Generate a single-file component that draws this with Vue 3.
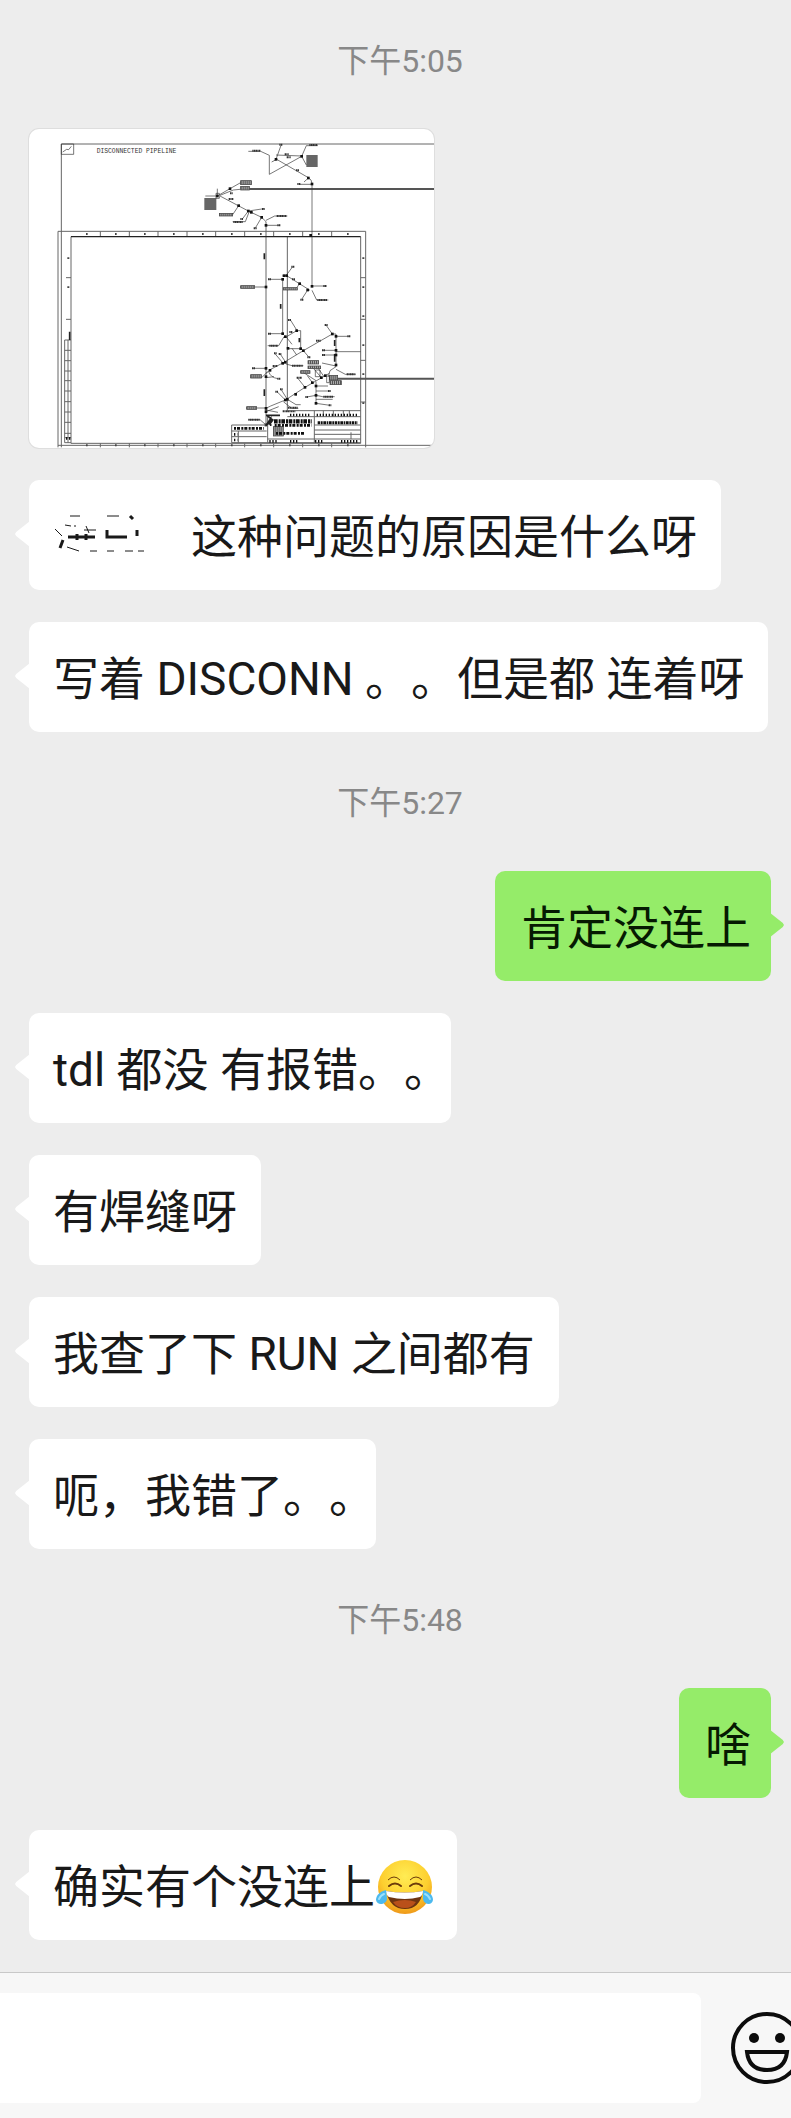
<script setup>
import { ref } from 'vue'

const draft = ref('')

const entries = [
  { kind: 'time', text: '下午5:05' },
  { kind: 'image' },
  { kind: 'in', text: '这种问题的原因是什么呀', masked: true },
  { kind: 'in', text: '写着 DISCONN 。。但是都 连着呀' },
  { kind: 'time', text: '下午5:27' },
  { kind: 'out', text: '肯定没连上' },
  { kind: 'in', text: 'tdl 都没 有报错。', stop: true },
  { kind: 'in', text: '有焊缝呀' },
  { kind: 'in', text: '我查了下 RUN 之间都有' },
  { kind: 'in', text: '呃，我错了。', stop: true },
  { kind: 'time', text: '下午5:48' },
  { kind: 'out', text: '啥' },
  { kind: 'in', text: '确实有个没连上', joy: true }
]

// Leader lines of the piping drawing
const leaders = [
  'M745 124H782L808 136V193L905 139L919 107H953M905 139L919 165',
  'M828 148L843 106M828 135L905 138M815 156L830 148L925 203Q936 208 936 222V530',
  'M897 223H936M912 216L925 204',
  'M652 236V258L690 236L720 219H742M660 256L700 240L720 238M616 258H652',
  'M660 258L745 303L785 322L798 335M716 287L698 314M745 303L727 327M748 304L736 335H698',
  'M745 303L792 296M785 322L766 354M798 331L824 318H862M798 346H840',
  'M722 531H798M805 508H848V670M848 497H858L878 470M860 497L930 541',
  'M899 520L888 537M923 540L905 568M936 541L950 570H985M936 528H980',
  'M805 671H848M860 680L890 662H902V716H864M890 660L872 631M803 707H836L852 680M858 680L876 703',
  'M798 790L812 778L852 757L910 722L997 672H1008V770M997 672L978 645M1008 679H1048',
  'M966 721H1008M966 735H1008M1008 725H1082M1008 770L990 782L985 800M966 759L1008 768M1008 778L1036 793H1067',
  'M856 755L840 731M848 758L824 730M858 762L876 767H910M910 722L928 743M890 735L876 715',
  'M757 775H798M752 803H785L803 785M806 785Q812 803 834 806M798 803L822 800',
  'M798 895L812 888L856 870L915 832L965 803L988 790',
  'M856 870L830 844M862 868L843 838M862 868L888 884H902M915 832L892 803M937 818L922 797M948 812L905 784M964 803L936 770M972 800L950 768',
  'M948 815V882M948 828H984M948 843H990M948 856L920 861M948 856L968 860H1004M948 868H998M948 880L990 886',
  'M740 894H798M798 900L834 907M798 905L836 890M745 929H780L798 945M850 875L875 895H895'
]

// Small nodes where pipe runs meet
const nodes = [
  [828, 148], [905, 139], [925, 204], [936, 222], [652, 258], [690, 236], [716, 287], [745, 303],
  [754, 307], [785, 322], [798, 346], [848, 508], [852, 497], [860, 497], [899, 521], [923, 540],
  [936, 529], [798, 531], [848, 671], [856, 680], [890, 662], [902, 716], [864, 715], [910, 722],
  [997, 672], [1008, 679], [1008, 721], [1008, 735], [1008, 765], [856, 757], [798, 775], [810, 781],
  [798, 800], [856, 870], [862, 868], [887, 853], [915, 832], [937, 818], [964, 803], [948, 828],
  [948, 856], [948, 880], [798, 895], [798, 905], [798, 945], [932, 376], [848, 760], [976, 797]
]

// Solid annotation labels: x, y, width, height
const labels = [
  [722, 212, 32, 12], [722, 229, 26, 11], [658, 310, 40, 8],
  [722, 527, 42, 8], [850, 533, 42, 7], [752, 794, 32, 10], [740, 890, 30, 8], [988, 796, 25, 14],
  [990, 812, 34, 12], [924, 752, 32, 10], [924, 768, 38, 8], [902, 782, 28, 8], [820, 950, 30, 28]
]

// Multi-line notes: x, y of the first line, width, number of lines
const notes = [
  [919, 138, 34, 6],
  [613, 267, 36, 6]
]

// Short size tags
const tags = [
  [838, 104, 10], [928, 105, 24], [757, 122, 24], [854, 133, 12], [860, 142, 12], [892, 222, 10],
  [888, 181, 10], [690, 250, 8], [686, 267, 14], [786, 297, 8], [761, 355, 10], [721, 327, 8],
  [832, 346, 10], [830, 318, 30], [700, 336, 28], [804, 508, 10], [874, 470, 10], [876, 508, 10],
  [970, 528, 10], [901, 569, 10], [952, 570, 30], [804, 671, 10], [864, 630, 10], [974, 645, 10],
  [1042, 679, 10], [966, 721, 10], [966, 735, 10], [948, 692, 14], [868, 666, 10], [808, 707, 26],
  [822, 730, 8], [836, 732, 8], [876, 767, 32], [818, 768, 14], [756, 775, 10], [832, 806, 10],
  [1040, 793, 26], [922, 742, 10], [890, 803, 16], [826, 845, 8], [840, 838, 8], [984, 843, 8],
  [986, 886, 8], [970, 860, 30], [864, 893, 30], [848, 904, 38], [745, 929, 34], [916, 861, 8]
]
</script>

<template>
  <div class="page">
    <main class="chat">
      <template v-for="(entry, i) in entries" :key="i">
        <time v-if="entry.kind === 'time'" class="time">{{ entry.text }}</time>

        <div v-else-if="entry.kind === 'image'" class="picture">
          <svg class="drawing" viewBox="87 57 1215 957" role="img" aria-label="Disconnected pipeline">
            <g class="soft">
              <path d="M184 1012V102H1302M174 1012V364H1097V1012M174 1006H1302" />
              <path d="M798 335V945M862 380V905M213 380V1000M213 1000H1082V380" />
              <path d="M301 364V380M388 364V380M474 364V380M561 364V380M647 364V380M734 364V380M821 364V380M908 364V380M995 364V380" />
              <path d="M301 1000V1012M388 1000V1012M474 1000V1012M561 1000V1012M647 1000V1012M734 1000V1012M821 1000V1012M908 1000V1012M995 1000V1012" />
              <path d="M198 503H213M198 628H213M1082 503H1097M1082 628H1097M1082 751H1097M1082 876H1097" />
              <path d="M194 690V998H213M204 690V998M194 690H213M194 721H213M194 752H213M194 783H213M194 812H213M194 843H213M194 875H213M194 906H213M194 937H213M194 970H213M194 983H213" />
            </g>
            <path class="frame" d="M213 380H1082" />
            <path class="cable" d="M748 237H1302M1012 806H1302" />
            <path class="line" d="M184 102H221V133H184Z" />
            <path class="pen" d="M188 126L200 118L206 119L214 109" />
            <path class="thick" d="M209 665V690" />
            <text class="caption" x="290" y="128">DISCONNECTED PIPELINE</text>

            <path v-for="(d, n) in leaders" :key="'l' + n" class="line" :d="d" />
            <path class="thick" d="M1004 690V708M1004 732V755M793 430V448M842 582V596M898 684V697M793 838V858" />
            <rect v-for="(p, n) in nodes" :key="'n' + n" class="ink" :x="p[0] - 4" :y="p[1] - 4" width="8" height="8" />
            <g v-for="(r, n) in labels" :key="'b' + n">
              <rect class="label" :x="r[0]" :y="r[1]" :width="r[2]" :height="r[3]" />
              <path class="stripes" :d="`M${r[0]} ${r[1] + r[3] / 2}h${r[2]}`" :stroke-width="r[3]" />
            </g>
            <g v-for="(b, n) in notes" :key="'m' + n">
              <path v-for="k in b[3]" :key="k" class="note" :d="`M${b[0]} ${b[1] + (k - 1) * 6}h${b[2]}`" />
            </g>
            <path v-for="(t, n) in tags" :key="'t' + n" class="tag" :d="`M${t[0]} ${t[1]}h${t[2]}`" />
            <path class="line" d="M648 250h10v15h-10zM980 798h8v20h-8zM946 780h14v20h-14z" />

            <g class="block">
              <path d="M695 945H800M695 945V998H1082M695 963H800M695 980H800M715 963V998M803 920V998M803 987H1082" />
              <path d="M862 902H1082M862 920H1082M943 902V998M943 945H1082M943 960H1082M943 973H1082M970 902V920M1000 902V920M1030 902V920M1048 902V920M1053 967V987" />
            </g>
            <path class="print big" d="M822 934H935" />
            <path class="print small" d="M824 946H935M828 970H915M702 955H792" />
            <path class="print medium" d="M953 938H1073" />
            <path class="print tiny" d="M870 915H930M950 915H1075M808 994H830M870 994H897M945 994H967M1023 994H1077M702 973H712M702 990H712M198 985H212" />
            <path class="thick" d="M800 916L818 930L799 945L812 926V948M820 928L808 944M798 916H840" />
            <path class="marks" d="M258 372H1060M205 442V600M1090 442V940M258 1006H1060" />
          </svg>
        </div>

        <p v-else class="bubble" :class="entry.kind">
          <svg v-if="entry.masked" class="mask" viewBox="0 0 138 54" aria-hidden="true">
            <path d="M10 30L7 38M15 27H42M24 24V30M33 24V30M54 20V27H74M84 20V26M77 6L80 9" />
            <path class="faint" d="M2 19L9 26M14 37L26 41M17 6H27M54 6H66M12 15L18 16M22 15V17M31 20H43M33 16L36 23M37 41H44M54 41H61M72 41H80M85 41H91" />
          </svg>{{ entry.text }}<span v-if="entry.stop" class="stop">。</span><svg v-if="entry.joy" class="joy" viewBox="0 0 57 56" role="img" aria-label="笑哭">
            <defs>
              <radialGradient id="joy-face" cx="50%" cy="30%" r="72%">
                <stop offset="0" stop-color="#ffec54" />
                <stop offset="0.6" stop-color="#fdcf2f" />
                <stop offset="1" stop-color="#ee9518" />
              </radialGradient>
            </defs>
            <circle cx="29" cy="28" r="27" fill="url(#joy-face)" />
            <path d="M12 21Q18 15 24 21M34 21Q40 15 46 21" fill="none" stroke="#6b3b0b" stroke-width="1" />
            <path d="M13 27Q19 22 25 27M34 27Q40 22 46 27" fill="none" stroke="#6b3b0b" stroke-width="2" stroke-linecap="round" />
            <path d="M10 32Q29 35 47 32Q44 50 29 50Q14 50 10 32Z" fill="#6e3511" />
            <path d="M17 43Q29 39 40 43Q36 49 29 49Q21 49 17 43Z" fill="#b9501a" />
            <path d="M10 32Q29 35 47 32Q47 36 44 38Q29 42 13 38Q10 36 10 32Z" fill="#fff" />
            <path d="M10 31C3 33 0 37 0 41C1 47 10 46 11 40Z" fill="#4cb9ee" />
            <path d="M47 31C54 33 57 37 57 41C56 47 48 46 47 40Z" fill="#4cb9ee" />
            <path d="M3 40Q5 36 8 35M54 40Q52 36 49 35" fill="none" stroke="#9be0fb" stroke-width="2" stroke-linecap="round" />
          </svg>
        </p>
      </template>
    </main>

    <form class="composer" @submit.prevent>
      <input v-model="draft" class="field" type="text" aria-label="消息" />
      <button class="emoji" type="button" aria-label="表情">
        <svg viewBox="0 0 72 72" aria-hidden="true">
          <circle cx="36" cy="36" r="34" />
          <circle class="eye" cx="23" cy="26" r="5" />
          <circle class="eye" cx="49" cy="26" r="5" />
          <path d="M16 40H56Q54 58 36 58Q18 58 16 40Z" />
        </svg>
      </button>
    </form>
  </div>
</template>

<style>
body {
  background: #ededed;
}
</style>

<style scoped>
.page {
  display: flex;
  flex-direction: column;
  overflow: hidden;
  background: #ededed;
  color: #191919;
  font-family: Roboto, "Noto Sans CJK SC", sans-serif;
}

.chat {
  display: flex;
  flex-direction: column;
  align-items: flex-start;
  gap: 32px;
  padding: 22px 20px 32px 29px;
}

.time {
  align-self: center;
  padding-top: 3px;
  font-size: 32px;
  line-height: 72px;
  color: #888;
}

.picture {
  box-sizing: border-box;
  width: 405px;
  max-width: 100%;
  border-radius: 10px;
  background: #fff;
  box-shadow: 0 0 0 1px #dedede;
  overflow: hidden;
}

.drawing {
  display: block;
  width: 100%;
}

.drawing path {
  fill: none;
}

.soft path,
.block path {
  stroke: #666;
  stroke-width: 3;
}

.frame {
  stroke: #222;
  stroke-width: 4;
}

.cable {
  stroke: #555;
  stroke-width: 6;
}

.line,
.pen {
  stroke: #333;
  stroke-width: 2;
}

.thick {
  stroke: #222;
  stroke-width: 5;
}

.ink {
  fill: #111;
}

.label {
  fill: #aaa;
  stroke: #333;
  stroke-width: 2;
}

.stripes {
  stroke: #555;
  stroke-dasharray: 3 3;
}

.note {
  stroke: #333;
  stroke-width: 4;
}

.tag {
  stroke: #333;
  stroke-width: 6;
  stroke-dasharray: 4 1;
}

.print {
  stroke: #111;
}

.big {
  stroke-width: 13;
  stroke-dasharray: 11 3 6 2;
}

.medium {
  stroke-width: 9;
  stroke-dasharray: 8 2 5 2;
}

.small {
  stroke-width: 8;
  stroke-dasharray: 6 3 9 4;
}

.tiny {
  stroke-width: 8;
  stroke-dasharray: 4 5;
}

.marks {
  stroke: #444;
  stroke-width: 6;
  stroke-dasharray: 5 82;
}

.caption {
  fill: #333;
  font-family: "Liberation Mono", monospace;
  font-size: 19px;
}

.bubble {
  position: relative;
  box-sizing: border-box;
  min-height: 110px;
  margin: 0;
  padding: 30px 24px 26px;
  border-radius: 10px;
  background: #fff;
  font-size: 46px;
  line-height: 54px;
  text-spacing-trim: space-all;
}

.bubble::before {
  content: "";
  position: absolute;
  top: 41px;
  left: -14px;
  width: 15px;
  height: 26px;
  background: inherit;
  clip-path: polygon(100% 0, 8% 42%, 0 50%, 8% 58%, 100% 100%);
}

.out {
  align-self: flex-end;
  padding-right: 20px;
  padding-left: 26px;
  background: #95ec69;
  color: #061a02;
}

.out::before {
  right: -13px;
  left: auto;
  clip-path: polygon(0 0, 92% 42%, 100% 50%, 92% 58%, 0 100%);
}

.stop {
  font-feature-settings: "halt";
}

.mask {
  width: 138px;
  height: 54px;
  vertical-align: bottom;
}

.mask path {
  fill: none;
  stroke: #191919;
  stroke-width: 3;
}

.mask .faint {
  stroke-width: 1;
}

.joy {
  width: 57px;
  height: 56px;
  margin: -1px 0 -1px 1px;
  vertical-align: bottom;
}

.composer {
  display: flex;
  align-items: center;
  gap: 30px;
  padding: 20px 0 15px;
  border-top: 1px solid #c8c8c8;
  background: #f7f7f7;
}

.field {
  flex: 1;
  min-width: 0;
  box-sizing: border-box;
  height: 110px;
  padding: 0 24px;
  border: 0;
  border-radius: 0 8px 8px 0;
  outline: 0;
  background: #fff;
  color: inherit;
  font: inherit;
  font-size: 46px;
}

.emoji {
  flex: none;
  width: 72px;
  height: 72px;
  margin-right: -12px;
  padding: 0;
  border: 0;
  background: none;
}

.emoji svg {
  display: block;
  width: 72px;
  height: 72px;
  fill: none;
  stroke: #0c0c0c;
  stroke-width: 4;
}

.emoji .eye {
  fill: #0c0c0c;
  stroke: none;
}
</style>
